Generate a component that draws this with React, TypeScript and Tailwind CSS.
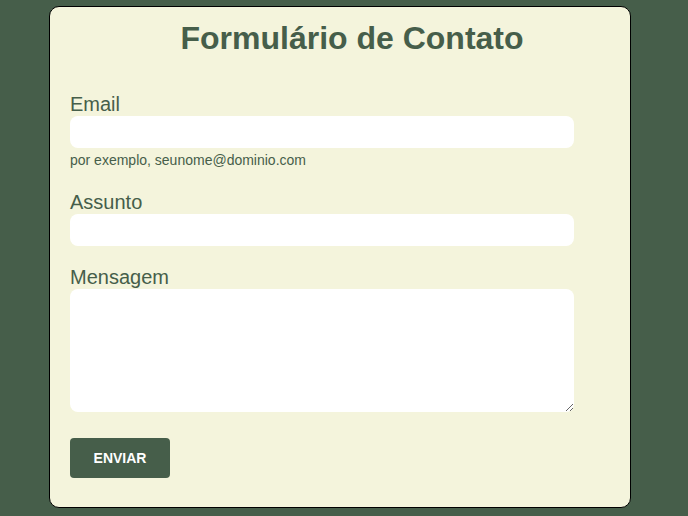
import React from 'react';

export default function App() {
  return (
    <div className="min-h-[516px] w-full bg-[#465e4a] pt-[6px] font-['Liberation_Sans',Arial,sans-serif] text-[#465e4a]">
      <div className="ml-[49px] h-[502px] w-[582px] rounded-[10px] border border-black bg-[#f4f4dc] pl-[20px] pt-[13px]">
        {/* Title */}
        <h1 className="pl-[4px] text-center text-[32px] font-bold leading-[37px]">Formulário de Contato</h1>

        <form className="mt-[36px] flex flex-col" onSubmit={(e) => e.preventDefault()}>
          <label className="text-[20px] leading-[23px]">Email</label>
          <input type="email" className="h-[32px] w-[504px] rounded-[8px] bg-white outline-none" />
          <p className="mt-[4px] text-[14px] leading-[16px]">por exemplo, seunome@dominio.com</p>

          <label className="mt-[23px] text-[20px] leading-[23px]">Assunto</label>
          <input type="text" className="h-[32px] w-[504px] rounded-[8px] bg-white outline-none" />

          <label className="mt-[19px] text-[20px] leading-[24px]">Mensagem</label>
          <textarea className="h-[123px] w-[504px] resize-y rounded-[8px] bg-white outline-none" />

          <button
            type="submit"
            className="mt-[26px] h-[40px] w-[100px] rounded-[4px] bg-[#465e4a] text-[14px] font-bold text-white"
          >
            ENVIAR
          </button>
        </form>
      </div>
    </div>
  );
}
